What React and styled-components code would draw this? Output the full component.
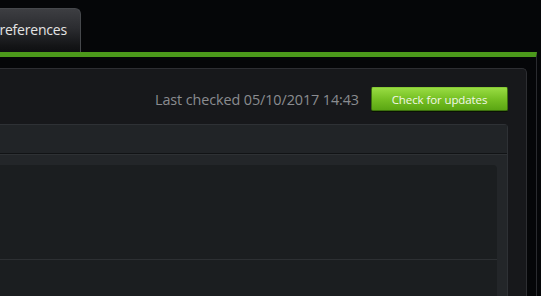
import React from 'react';
import styled, {createGlobalStyle} from 'styled-components';

const GlobalStyle = createGlobalStyle`
  html, body {
    margin: 0;
    padding: 0;
    background: #050608;
    overflow: hidden;
  }
  body {
    font-family: "Open Sans", "Noto Sans", sans-serif;
  }
`;

const Page = styled.div`
  width: 541px;
  height: 296px;
  overflow: hidden;
  background: #050608;
`;

const TabStrip = styled.div`
  height: 52px;
  display: flex;
  align-items: flex-end;
`;

const Tab = styled.div`
  box-sizing: border-box;
  margin-left: -30px;
  width: 111px;
  height: 44px;
  display: flex;
  align-items: center;
  justify-content: flex-end;
  padding: 0 13px 2px 0;
  border: 1px solid #46484c;
  border-bottom: none;
  border-radius: 6px 6px 0 0;
  background: linear-gradient(#3d3e42, #2b2c30 45%, #141517 85%, #0e0f11);
  color: #e4e4e4;
  font-size: 14px;
  letter-spacing: -0.2px;
`;

const Frame = styled.div`
  box-sizing: border-box;
  width: 537px;
  height: 244px;
  border-top: 5px solid #4c991b;
  border-right: 1px solid #2a2b2f;
  padding: 11px 9px 0 0;
  display: flex;
  flex-direction: column;
`;

const Panel = styled.div`
  flex: 1;
  margin-left: -20px;
  border: 1px solid #2d2e32;
  border-bottom: none;
  border-radius: 5px 5px 0 0;
  background: #17181b;
  padding: 18px 18px 0 0;
  display: flex;
  flex-direction: column;
`;

const Toolbar = styled.div`
  display: flex;
  justify-content: flex-end;
  align-items: center;
  gap: 12px;
  height: 24px;
`;

const Status = styled.span`
  color: #8a8c90;
  font-size: 14.4px;
  letter-spacing: -0.1px;
`;

const UpdateButton = styled.button`
  box-sizing: border-box;
  width: 137px;
  height: 24px;
  border: 1px solid #3d700f;
  border-top-color: #86c934;
  border-radius: 2px;
  background: linear-gradient(#98dc42, #76c024 50%, #5ba613);
  box-shadow: 0 1px 0 #0b1204;
  color: #f2f7ea;
  font-family: inherit;
  font-size: 11.5px;
  letter-spacing: -0.1px;
  padding: 0;
  cursor: pointer;
`;

const Section = styled.div`
  flex: 1;
  margin-top: 13px;
  margin-left: -20px;
  border: 1px solid #2e3135;
  border-bottom: none;
  border-radius: 4px 4px 0 0;
  background: #232629;
  display: flex;
  flex-direction: column;
`;

const SectionHeader = styled.div`
  height: 28px;
  background: #212427;
  border-bottom: 1px solid #111315;
  box-shadow: 0 1px 0 #2e3134;
`;

const SectionBody = styled.div`
  flex: 1;
  padding: 11px 10px 0 0;
  display: flex;
  flex-direction: column;
`;

const Card = styled.div`
  flex: 1;
  background: #1b1e20;
  border-radius: 0 4px 0 0;
  display: flex;
  flex-direction: column;
`;

const Row = styled.div`
  height: ${({h}) => h}px;
  border-bottom: ${({last}) => (last ? 'none' : '1px solid #2d3033')};
`;

export default function App() {
  return (
    <Page>
      <GlobalStyle />
      <TabStrip>
        <Tab>Preferences</Tab>
      </TabStrip>
      <Frame>
        <Panel>
          <Toolbar>
            <Status>Last checked 05/10/2017 14:43</Status>
            <UpdateButton>Check for updates</UpdateButton>
          </Toolbar>
          <Section>
            <SectionHeader />
            <SectionBody>
              <Card>
                <Row h={94} />
                <Row h={60} last />
              </Card>
            </SectionBody>
          </Section>
        </Panel>
      </Frame>
    </Page>
  );
}
